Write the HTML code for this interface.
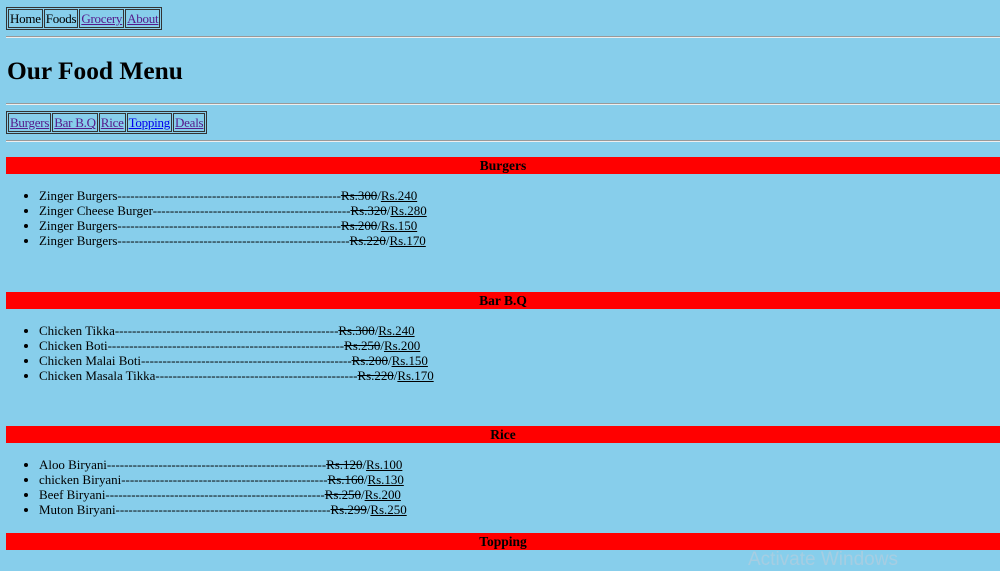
<!DOCTYPE html>
<html><head><style>
body{margin:0;background:#87ceeb;font-family:"Liberation Serif",serif;font-size:13px;color:#000;width:1000px;height:566px;overflow:hidden;position:relative}
a{color:#551a8b}
.nav{position:absolute;left:6px;border:1px solid #333;border-collapse:separate;border-spacing:1px;font-size:13px;letter-spacing:-0.25px}
.nav td{border:1px solid #333;padding:1px 1px;line-height:15px}
hr{position:absolute;left:6px;width:994px;margin:0;border:0;border-top:1px solid #999;border-bottom:1px solid #eee;height:0}
h1{position:absolute;left:7px;top:56px;margin:0;font-size:25.4px;line-height:30px}
.bar{position:absolute;left:6px;width:994px;height:17px;background:#f00;text-align:center;font-weight:bold;font-size:13.5px;line-height:17px}
ul{position:absolute;left:0;margin:0;padding-left:39px;line-height:15px;letter-spacing:-0.03px}
s{color:#000}
ul a{color:#000}
.wm{position:absolute;left:748px;top:549px;font-family:"Liberation Sans",sans-serif;font-size:19px;color:rgba(170,205,225,0.9)}
</style></head><body>
<table class="nav" style="top:7px"><tr><td>Home</td><td>Foods</td><td><a href="#">Grocery</a></td><td><a href="#">About</a></td></tr></table>
<hr style="top:36px">
<h1>Our Food Menu</h1>
<hr style="top:103px">
<table class="nav" style="top:111px"><tr><td><a href="#">Burgers</a></td><td><a href="#">Bar B.Q</a></td><td><a href="#">Rice</a></td><td><a href="#" style="color:#00e">Topping</a></td><td><a href="#">Deals</a></td></tr></table>
<hr style="top:140px">
<div class="bar" style="top:157px">Burgers</div>
<ul style="top:188px">
<li>Zinger Burgers----------------------------------------------------<s>Rs.300</s>/<a href="#">Rs.240</a></li>
<li>Zinger Cheese Burger----------------------------------------------<s>Rs.320</s>/<a href="#">Rs.280</a></li>
<li>Zinger Burgers----------------------------------------------------<s>Rs.200</s>/<a href="#">Rs.150</a></li>
<li>Zinger Burgers------------------------------------------------------<s>Rs.220</s>/<a href="#">Rs.170</a></li>
</ul>
<div class="bar" style="top:292px">Bar B.Q</div>
<ul style="top:323px">
<li>Chicken Tikka----------------------------------------------------<s>Rs.300</s>/<a href="#">Rs.240</a></li>
<li>Chicken Boti-------------------------------------------------------<s>Rs.250</s>/<a href="#">Rs.200</a></li>
<li>Chicken Malai Boti-------------------------------------------------<s>Rs.200</s>/<a href="#">Rs.150</a></li>
<li>Chicken Masala Tikka-----------------------------------------------<s>Rs.220</s>/<a href="#">Rs.170</a></li>
</ul>
<div class="bar" style="top:426px">Rice</div>
<ul style="top:457px">
<li>Aloo Biryani---------------------------------------------------<s>Rs.120</s>/<a href="#">Rs.100</a></li>
<li>chicken Biryani------------------------------------------------<s>Rs.160</s>/<a href="#">Rs.130</a></li>
<li>Beef Biryani---------------------------------------------------<s>Rs.250</s>/<a href="#">Rs.200</a></li>
<li>Muton Biryani--------------------------------------------------<s>Rs.299</s>/<a href="#">Rs.250</a></li>
</ul>
<div class="bar" style="top:533px">Topping</div>
<div class="wm">Activate Windows</div>
</body></html>
